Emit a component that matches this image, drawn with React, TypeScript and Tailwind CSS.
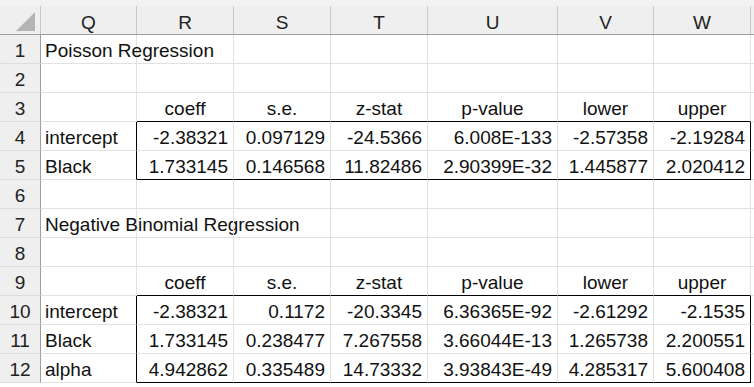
import React from "react";

// column widths include the 1px right gridline
const cols = [
  { key: "Q", w: "w-[96px]" },
  { key: "R", w: "w-[97px]" },
  { key: "S", w: "w-[97px]" },
  { key: "T", w: "w-[97px]" },
  { key: "U", w: "w-[130px]" },
  { key: "V", w: "w-[96px]" },
  { key: "W", w: "w-[97px]" },
];

type Cell = { text?: string; align?: "left" | "center" | "right" };

const heads = ["coeff", "s.e.", "z-stat", "p-value", "lower", "upper"];

const nums = (label: string, vals: string[]): Cell[] => [
  { text: label },
  ...vals.map((t) => ({ text: t, align: "right" as const })),
];

const rows: Cell[][] = [
  [{ text: "Poisson Regression" }],
  [],
  [{}, ...heads.map((h) => ({ text: h, align: "center" as const }))],
  nums("intercept", ["-2.38321", "0.097129", "-24.5366", "6.008E-133", "-2.57358", "-2.19284"]),
  nums("Black", ["1.733145", "0.146568", "11.82486", "2.90399E-32", "1.445877", "2.020412"]),
  [],
  [{ text: "Negative Binomial Regression" }],
  [],
  [{}, ...heads.map((h) => ({ text: h, align: "center" as const }))],
  nums("intercept", ["-2.38321", "0.1172", "-20.3345", "6.36365E-92", "-2.61292", "-2.1535"]),
  nums("Black", ["1.733145", "0.238477", "7.267558", "3.66044E-13", "1.265738", "2.200551"]),
  nums("alpha", ["4.942862", "0.335489", "14.73332", "3.93843E-49", "4.285317", "5.600408"]),
];

// row numbers (1-based) that sit inside a black-bordered box
const boxes = [
  { top: 4, bottom: 5 },
  { top: 10, bottom: 12 },
];

export default function App() {
  return (
    <div className="w-[754px] h-[387px] bg-white overflow-hidden text-[19px] leading-[19px] text-[#111] font-['Liberation_Sans',Arial,sans-serif]">
      {/* top strip */}
      <div className="h-[6px] bg-[#f3f1f3]" />

      {/* column header */}
      <div className="flex h-[29px] bg-[#efefef] border-b border-[#9e9e9e]">
        <div className="w-[41px] shrink-0 relative border-r border-[#c8c8c8]">
          <div className="absolute right-[5px] bottom-[3px] w-0 h-0 border-l-[19px] border-l-transparent border-b-[19px] border-b-[#b4b4b4]" />
        </div>
        {cols.map((c) => (
          <div
            key={c.key}
            className={`${c.w} shrink-0 flex items-end justify-center pb-[2px] border-r border-[#c8c8c8] text-[#222]`}
          >
            {c.key}
          </div>
        ))}
        <div className="flex-1" />
      </div>

      {rows.map((cells, i) => {
        const r = i + 1;
        const boxed = boxes.some((b) => r >= b.top && r <= b.bottom);
        const aboveBox = boxes.some((b) => b.top - 1 === r);
        const boxBottom = boxes.some((b) => b.bottom === r);
        return (
          <div key={r} className="flex h-[29px]">
            <div className="w-[41px] shrink-0 flex items-end justify-center pb-[3px] bg-[#efefef] border-r border-b border-r-[#9e9e9e] border-b-[#dcdcdc] text-[#222]">
              {r}
            </div>
            {cols.map((c, ci) => {
              const cell = cells[ci] ?? {};
              const rightBlack = boxed && (ci === 0 || ci === cols.length - 1);
              const bottomBlack = ci > 0 && (aboveBox || (boxed && boxBottom));
              const align =
                cell.align === "right"
                  ? "justify-end pr-[5px]"
                  : cell.align === "center"
                  ? "justify-center"
                  : "justify-start pl-[4px]";
              return (
                <div
                  key={c.key}
                  className={`${c.w} shrink-0 flex items-end pb-[3px] whitespace-nowrap border-r border-b ${align} ${
                    rightBlack ? "border-r-black" : "border-r-[#e1e1e1]"
                  } ${bottomBlack ? "border-b-black" : "border-b-[#e1e1e1]"}`}
                >
                  {cell.text ?? ""}
                </div>
              );
            })}
            <div className="flex-1 border-b border-[#e1e1e1]" />
          </div>
        );
      })}
    </div>
  );
}
